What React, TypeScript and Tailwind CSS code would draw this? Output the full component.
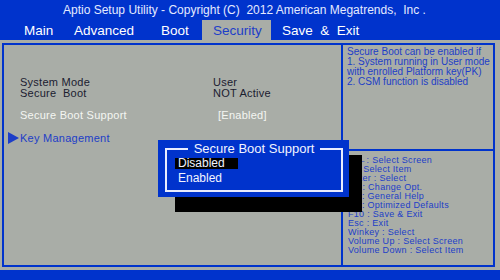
const FONT = "font-['Liberation_Sans',Arial,sans-serif]";

const keys = [
  "→←: Select Screen",
  "↑↓: Select Item",
  "Enter : Select",
  "+/- : Change Opt.",
  "F1 : General Help",
  "F9 : Optimized Defaults",
  "F10 : Save & Exit",
  "Esc : Exit",
  "Winkey : Select",
  "Volume Up : Select Screen",
  "Volume Down : Select Item",
];

function Header() {
  return (
    <div className="h-[40px] bg-[#0033cc] flex flex-col">
      <div className="h-[20px] pl-[63px] pt-[2px] text-[12px] leading-[16px] text-[#e4eaff] whitespace-pre">
        Aptio Setup Utility - Copyright (C)  2012 American Megatrends,  Inc .
      </div>
      <div className="h-[20px] flex pl-[24px] text-[13.5px] leading-[18px] text-white">
        <div className="w-[50px] pt-[2px]">Main</div>
        <div className="w-[87px] pt-[2px]">Advanced</div>
        <div className="w-[41px] pt-[2px]">Boot</div>
        <div className="w-[69px] pl-[11px] pt-[2px] bg-[#a9ada7] text-[#1d3ec8]">Security</div>
        <div className="pl-[11px] pt-[2px] whitespace-pre">Save  &  Exit</div>
      </div>
    </div>
  );
}

function SetupPanel() {
  return (
    <div className="w-[339px] border-r-2 border-[#0033cc] pt-[32px] text-[11px] leading-[11px] tracking-[0.25px] text-[#1b2030]">
      <div className="grid grid-cols-[193px_1fr] pl-[16px]">
        <span>System Mode</span>
        <span>User</span>
        <span className="whitespace-pre">Secure  Boot</span>
        <span>NOT Active</span>
      </div>
      <div className="grid grid-cols-[198px_1fr] pl-[16px] mt-[11px] text-[#f4f6f2]">
        <span>Secure Boot Support</span>
        <span>[Enabled]</span>
      </div>
      <div className="flex items-center mt-[11px] pl-[4px] text-[#1d3ec8]">
        <svg width="11" height="12" viewBox="0 0 11 12" className="mr-[1px]">
          <path d="M0 0 L11 6 L0 12 Z" fill="#1d3ec8" />
        </svg>
        <span>Key Management</span>
      </div>
    </div>
  );
}

function HelpPanel() {
  return (
    <div className="flex-1 flex flex-col text-[#1d3ec8]">
      <div className="h-[106px] border-b-2 border-[#0033cc] pl-[4px] pt-[2px] text-[10px] leading-[10px]">
        <div>Secure Boot can be enabled if</div>
        <div>1. System running in User mode</div>
        <div>with enrolled Platform key(PK)</div>
        <div>2. CSM function is disabled</div>
      </div>
      <div className="pl-[5px] pt-[5px] text-[9px] leading-[9px] tracking-[0.3px]">
        {keys.map((k) => (
          <div key={k} className="whitespace-pre">
            {k}
          </div>
        ))}
      </div>
    </div>
  );
}

function Popup() {
  return (
    <>
      <div className="absolute left-[175px] top-[155px] w-[187px] h-[57px] bg-black" />
      <div className="absolute left-[158px] top-[140px] w-[191px] h-[57px] bg-[#0033cc] pl-[7px] pt-[8px]">
        <div className="relative w-[178px] h-[44px] border-2 border-[#e8ecff] pt-[8px] pl-[8px] text-[12px] leading-[11px] text-[#f2f4ff]">
          <div className="absolute left-0 right-0 -top-[8px] flex justify-center">
            <span className="bg-[#0033cc] px-[6px] text-[13px] leading-[14px]">Secure Boot Support</span>
          </div>
          <div className="w-[63px] bg-black pl-[3px] leading-[11px]">Disabled</div>
          <div className="pl-[3px] mt-[4px]">Enabled</div>
        </div>
      </div>
    </>
  );
}

export default function App() {
  return (
    <div className={`${FONT} relative w-[500px] h-[280px] overflow-hidden bg-[#a9ada7] flex flex-col`}>
      <Header />
      <div className="flex-1 pl-[2px] pt-[3px] pb-[3px]">
        <div className="w-[493px] h-full border-2 border-[#0033cc] flex">
          <SetupPanel />
          <HelpPanel />
        </div>
      </div>
      <div className="h-[10px] bg-[#0033cc]" />
      <Popup />
    </div>
  );
}
